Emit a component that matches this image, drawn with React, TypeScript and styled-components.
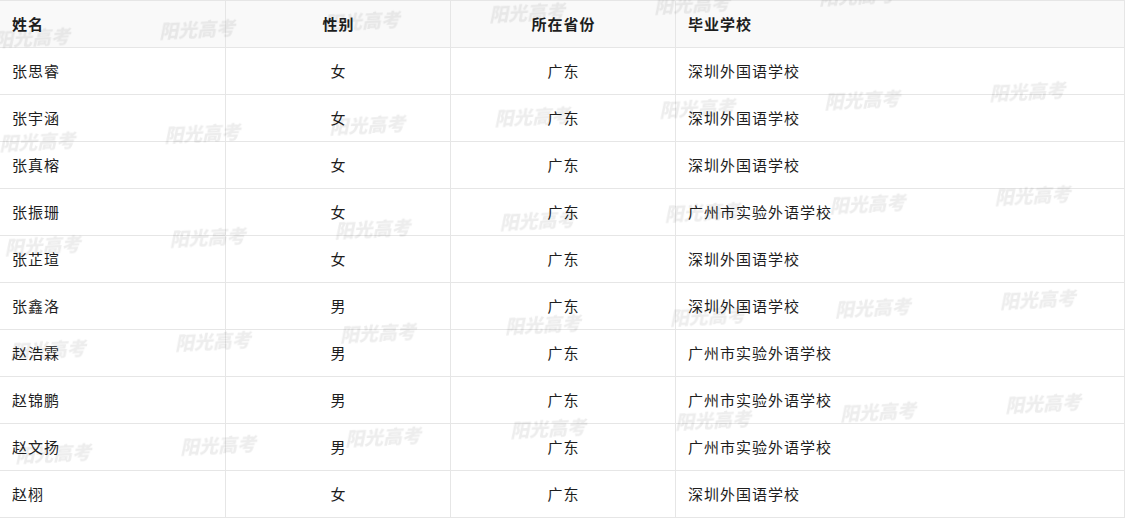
import React from 'react';
import styled, { createGlobalStyle, css } from 'styled-components';

const GlobalStyle = createGlobalStyle`
  html, body {
    margin: 0;
    padding: 0;
    background: #ffffff;
  }
  body {
    font-family: "Noto Sans CJK SC", "Liberation Sans", sans-serif;
  }
`;

const Page = styled.div`
  position: relative;
  width: 1125px;
  height: 518px;
  overflow: hidden;
  background: #ffffff;
`;

const Table = styled.div`
  display: flex;
  flex-direction: column;
  gap: 1px;
  padding: 1px 1px 1px 0;
  width: 1125px;
  box-sizing: border-box;
  background: #e6e6e6;
`;

const Row = styled.div<{ $head?: boolean }>`
  display: grid;
  grid-template-columns: 225px 224px 224px 448px;
  gap: 1px;
  height: 46px;

  & > div {
    background: ${p => (p.$head ? '#f9f9f9' : '#ffffff')};
    font-weight: ${p => (p.$head ? 700 : 400)};
  }
`;

const Cell = styled.div<{ $center?: boolean }>`
  display: flex;
  align-items: center;
  padding: 0 12px 2px;
  font-size: 15px;
  letter-spacing: 1px;
  color: #1e1e1e;
  white-space: nowrap;
  ${p => p.$center && css`
    justify-content: center;
    padding: 0 0 2px 1px;
  `}
`;

// watermark lies over the whole table
const Watermark = styled.svg`
  position: absolute;
  left: 0;
  top: 0;
  pointer-events: none;
`;

const WaterText = styled.text`
  font-family: "Noto Sans CJK SC", sans-serif;
  font-size: 19px;
  font-weight: 900;
  font-style: italic;
  fill: rgba(0, 0, 0, 0.07);
`;

type Student = { name: string; sex: string; prov: string; school: string };

const SZ = '深圳外国语学校';
const GZ = '广州市实验外语学校';

const students: Student[] = [
  { name: '张思睿', sex: '女', prov: '广东', school: SZ },
  { name: '张宇涵', sex: '女', prov: '广东', school: SZ },
  { name: '张真榕', sex: '女', prov: '广东', school: SZ },
  { name: '张振珊', sex: '女', prov: '广东', school: GZ },
  { name: '张芷瑄', sex: '女', prov: '广东', school: SZ },
  { name: '张鑫洛', sex: '男', prov: '广东', school: SZ },
  { name: '赵浩霖', sex: '男', prov: '广东', school: GZ },
  { name: '赵锦鹏', sex: '男', prov: '广东', school: GZ },
  { name: '赵文扬', sex: '男', prov: '广东', school: GZ },
  { name: '赵栩', sex: '女', prov: '广东', school: SZ },
];

function Marks() {
  return (
    <Watermark width="1125" height="518">
      <defs>
        <pattern
          id="wm"
          x="-50"
          y="0"
          width="165.2"
          height="104.1"
          patternUnits="userSpaceOnUse"
        >
          <WaterText x="80" y="47" textAnchor="middle">阳光高考</WaterText>
        </pattern>
      </defs>
      <g transform="rotate(-2.9)">
        <rect x="-100" y="-100" width="1400" height="620" fill="url(#wm)" />
      </g>
    </Watermark>
  );
}

export default function App() {
  return (
    <Page>
      <GlobalStyle />
      <Table>
        <Row $head>
          <Cell>姓名</Cell>
          <Cell $center>性别</Cell>
          <Cell $center>所在省份</Cell>
          <Cell>毕业学校</Cell>
        </Row>
        {students.map(s => (
          <Row key={s.name}>
            <Cell>{s.name}</Cell>
            <Cell $center>{s.sex}</Cell>
            <Cell $center>{s.prov}</Cell>
            <Cell>{s.school}</Cell>
          </Row>
        ))}
      </Table>
      <Marks />
    </Page>
  );
}
